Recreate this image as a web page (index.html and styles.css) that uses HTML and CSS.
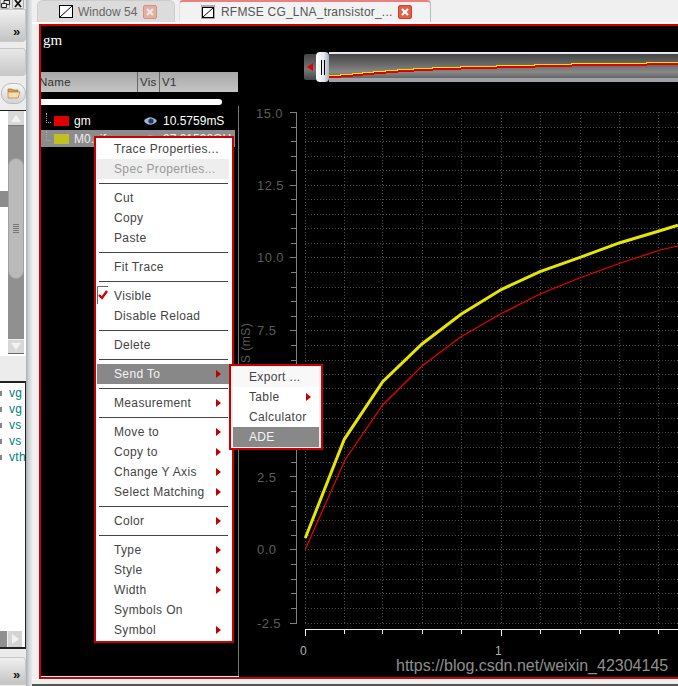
FILE: index.html
```html
<!DOCTYPE html>
<html lang="en">
<head>
<meta charset="utf-8">
<title>RFMSE CG_LNA_transistor</title>
<link rel="stylesheet" href="styles.css">
</head>
<body>
<div class="app">
  <aside class="side">
    <div class="wm">
      <span class="wm-btn">
        <svg width="9" height="8" viewBox="0 0 9 8"><path d="M.5 3.5h5v4h-5zM3 3V.5h5.500v4H6" fill="none" stroke="#222"/></svg>
      </span>
      <span class="wm-btn wm-x">
        <svg width="10" height="8" viewBox="0 0 10 8"><path d="M2 0 8 7M8 0 2 7" fill="none" stroke="#111" stroke-width="1.800"/></svg>
      </span>
    </div>
    <div class="panel-btn panel-a"><span class="more">»</span></div>
    <div class="panel-btn panel-b"></div>
    <div class="tool-row">
      <span class="round-btn">
        <svg width="14" height="12" viewBox="0 0 14 12"><path d="M1 2h4l1 1h5v2H1z" fill="#d8a050" stroke="#a87030" stroke-width=".7"/><path d="M1 5h12l-2 6H1z" fill="#f6dcae" stroke="#b88040" stroke-width=".7"/></svg>
      </span>
    </div>
    <div class="side-tree">
      <div class="tree-gutter"><div class="tree-mark"></div></div>
      <div class="vscroll">
        <div class="arrow-btn"><span class="tri-up"></span></div>
        <div class="thumb"><span class="grip"></span></div>
        <div class="trough"></div>
        <div class="arrow-btn arrow-bottom"><span class="tri-down"></span></div>
      </div>
    </div>
    <div class="side-sep"></div>
    <div class="side-list">
      <div class="vars">
        <div class="var"><i></i>vg</div>
        <div class="var"><i></i>vg</div>
        <div class="var"><i></i>vs</div>
        <div class="var"><i></i>vs</div>
        <div class="var"><i></i>vth</div>
      </div>
      <div class="hscroll"><span class="h-btn"><span class="tri-right"></span></span></div>
    </div>
    <div class="panel-btn panel-c"><span class="more">»</span></div>
  </aside>
  <div class="strip"></div>
  <main class="main">
    <div class="tabs">
      <div class="tab tab-off">
        <svg class="tab-icon" width="14" height="13" viewBox="0 0 14 13"><rect x=".5" y=".5" width="13" height="12" fill="#fff" stroke="#000"/><path d="M1 12 13 1" stroke="#000"/></svg>
        <span class="tab-name">Window 54</span>
        <span class="close close-off"><svg width="12" height="12" viewBox="0 0 12 12"><path d="M3 3l6 6M9 3l-6 6" stroke="#f4e4e0" stroke-width="2.200"/></svg></span>
      </div>
      <div class="tab tab-on">
        <span class="icon-bg"><svg class="tab-icon" width="12" height="11" viewBox="0 0 12 11"><rect x=".5" y=".5" width="11" height="10" fill="#fff" stroke="#000"/><path d="M1 10 11 1" stroke="#000"/></svg></span>
        <span class="tab-name">RFMSE CG_LNA_transistor_...</span>
        <span class="close close-on"><svg width="12" height="12" viewBox="0 0 12 12"><path d="M3 3l6 6M9 3l-6 6" stroke="#fff" stroke-width="2.200"/></svg></span>
      </div>
    </div>
    <div class="frame">
      <section class="legend">
        <div class="title">gm</div>
        <div class="head">
          <span class="col col-name">Name</span>
          <span class="col col-vis">Vis</span>
          <span class="col">V1</span>
        </div>
        <div class="bar"></div>
        <div class="traces">
          <div class="trace">
            <span class="tree"></span><span class="swatch sw-red"></span>
            <span class="t-name">gm</span>
            <svg class="eye" width="15" height="10" viewBox="0 0 15 10"><path d="M1 5C4 0 10 0 14 5 10 10 4 10 1 5z" fill="#9fb4d8"/><circle cx="8" cy="5" r="2.600" fill="#2a3a5a"/></svg>
            <span class="t-val">10.5759mS</span>
          </div>
          <div class="trace trace-sel">
            <span class="tree"></span><span class="swatch sw-yellow"></span>
            <span class="t-name">M0.vif</span>
            <svg class="eye" width="15" height="10" viewBox="0 0 15 10"><path d="M1 5C4 0 10 0 14 5 10 10 4 10 1 5z" fill="#9fb4d8"/><circle cx="8" cy="5" r="2.600" fill="#2a3a5a"/></svg>
            <span class="t-val">97.91598GH</span>
          </div>
        </div>
      </section>
      <section class="plot">
        <div class="slider">
          <div class="s-left"><span class="tri-left"></span></div>
          <div class="s-handle"><i></i><i></i></div>
          <div class="s-track">
            <svg class="s-svg" width="349" height="30" viewBox="329 52 349 30" shape-rendering="crispEdges">
              <path d="M329 77H340V76H352V75H362V74H373V73H385V72H397V71H413V70H432V69H460V68H496V67H534V66H571V65H646V64H678" fill="none" stroke="#e00000" stroke-width="2"/>
              <path d="M329 75.500H340V74.500H352V73.500H362V72.500H373V71.500H385V70.500H397V69.500H413V68.500H432V67.500H460V66.500H496V65.500H534V64.500H571V63.500H646V62.500H678" fill="none" stroke="#e6e600"/>
            </svg>
          </div>
        </div>
        <svg class="chart" width="439" height="577" viewBox="239 100 439 577">
          <path class="grid" d="M305 112.500H678M305 127.500H678M305 141.500H678M305 156.500H678M305 170.500H678M305 185.500H678M305 199.500H678M305 214.500H678M305 228.500H678M305 243.500H678M305 257.500H678M305 272.500H678M305 287.500H678M305 301.500H678M305 316.500H678M305 330.500H678M305 345.500H678M305 360.500H678M305 374.500H678M305 388.500H678M305 403.500H678M305 418.500H678M305 432.500H678M305 447.500H678M305 462.500H678M305 476.500H678M305 491.500H678M305 506.500H678M305 520.500H678M305 535.500H678M305 549.500H678M305 564.500H678M305 579.500H678M305 593.500H678M305 608.500H678M305 623.500H678"/>
          <path class="grid" d="M305.500 112V624M344.500 112V624M382.500 112V624M422.500 112V624M461.500 112V624M501.500 112V624M540.500 112V624M580.500 112V624M619.500 112V624M658.500 112V624"/>
          <path class="axis-y" d="M296.500 112V624M290 112.500H297M291 127.500H297M291 141.500H297M291 156.500H297M291 170.500H297M290 185.500H297M291 199.500H297M291 214.500H297M291 228.500H297M291 243.500H297M290 257.500H297M291 272.500H297M291 287.500H297M291 301.500H297M291 316.500H297M290 330.500H297M291 345.500H297M291 360.500H297M291 374.500H297M291 388.500H297M290 403.500H297M291 418.500H297M291 432.500H297M291 447.500H297M291 462.500H297M290 476.500H297M291 491.500H297M291 506.500H297M291 520.500H297M291 535.500H297M290 549.500H297M291 564.500H297M291 579.500H297M291 593.500H297M291 608.500H297M290 623.500H297"/>
          <path class="axis-x" d="M305 629.500H678M305.500 629V636M344.500 629V634M382.500 629V634M422.500 629V634M461.500 629V634M501.500 629V636M540.500 629V634M580.500 629V634M619.500 629V634M658.500 629V634"/>
          <polyline class="curve-y" points="305.300,538 344.300,439.300 382.700,381.700 422,344 461,314.300 501.700,289.300 540,271.700 580,257.300 620,242.700 660,230.700 678,225.300"/>
          <polyline class="curve-r" points="305.300,549.300 345,460 382.700,405 422,366 461,336.700 500,314.300 540,294 580,277.700 620,263.300 660,250 678,246"/>
          <g class="y-lab">
            <text x="256" y="117.500">15.0</text>
            <text x="257" y="190">12.5</text>
            <text x="257" y="262">10.0</text>
            <text x="257" y="335">7.5</text>
            <text x="257" y="408">5.0</text>
            <text x="257" y="482">2.5</text>
            <text x="257" y="554">0.0</text>
            <text x="257" y="628">-2.5</text>
          </g>
          <text class="y-title" transform="translate(250 363) rotate(-90)">S (mS)</text>
          <text class="x-lab" x="300" y="655">0</text>
          <text class="x-lab" x="495" y="655">1</text>
        </svg>
      </section>
    </div>
    <div class="foot"></div>
  </main>

  <div class="menu">
    <div class="mi mi-white">Trace Properties...</div>
    <div class="mi mi-off">Spec Properties...</div>
    <div class="ms"></div>
    <div class="mi">Cut</div>
    <div class="mi">Copy</div>
    <div class="mi">Paste</div>
    <div class="ms"></div>
    <div class="mi">Fit Trace</div>
    <div class="ms"></div>
    <div class="mi">
      <svg class="check" width="12" height="19" viewBox="0 0 12 19"><path d="M.5 18V.5H11" fill="none" stroke="#666"/><path d="M2 9l3 3 5-7" fill="none" stroke="#d00000" stroke-width="2.400"/></svg>
      <span>Visible</span>
    </div>
    <div class="mi">Disable Reload</div>
    <div class="ms"></div>
    <div class="mi">Delete</div>
    <div class="ms"></div>
    <div class="mi mi-sel">Send To<span class="ar"></span></div>
    <div class="ms"></div>
    <div class="mi">Measurement<span class="ar"></span></div>
    <div class="ms"></div>
    <div class="mi">Move to<span class="ar"></span></div>
    <div class="mi">Copy to<span class="ar"></span></div>
    <div class="mi">Change Y Axis<span class="ar"></span></div>
    <div class="mi">Select Matching<span class="ar"></span></div>
    <div class="ms"></div>
    <div class="mi">Color<span class="ar"></span></div>
    <div class="ms"></div>
    <div class="mi">Type<span class="ar"></span></div>
    <div class="mi">Style<span class="ar"></span></div>
    <div class="mi">Width<span class="ar"></span></div>
    <div class="mi">Symbols On</div>
    <div class="mi">Symbol<span class="ar"></span></div>
  </div>

  <div class="menu submenu">
    <div class="mi">Export ...</div>
    <div class="mi">Table<span class="ar"></span></div>
    <div class="mi">Calculator</div>
    <div class="mi mi-sel">ADE</div>
  </div>

  <div class="watermark">https://blog.csdn.net/weixin_42304145</div>
</div>
</body>
</html>
```
FILE: styles.css
```css
* { box-sizing: border-box; }
html, body { margin: 0; padding: 0; background: #000; }
body { font-family: "Liberation Sans", Arial, sans-serif; }
.app {
  position: relative;
  display: flex;
  width: 678px;
  height: 686px;
  overflow: hidden;
  background: #f0f0f0;
}

/* left dock */
.side {
  width: 26px;
  flex: none;
  display: flex;
  flex-direction: column;
  background: #ececec;
}
.wm { height: 9px; display: flex; gap: 2px; overflow: hidden; background: #e4e4e4; }
.wm-btn { width: 10px; height: 9px; background: #e8e8e8; border: 1px solid #aaa; border-top: 0; border-radius: 0 0 2px 2px; }
.wm-btn svg { display: block; }
.wm-x { width: 12px; }
.panel-btn { background: linear-gradient(#f0f0f0, #c4c4c4); border: 1px solid #c8c8c8; border-left: 0; border-radius: 0 0 4px 0; position: relative; }
.panel-a { height: 33px; margin-bottom: 6px; }
.panel-b { height: 28px; border-radius: 0 4px 4px 0; background: linear-gradient(#e8e8e8, #c8c8c8); }
.panel-c { height: 28px; margin-top: 8px; border-radius: 0 4px 0 0; }
.more { position: absolute; left: 13px; bottom: 3px; font-size: 13px; line-height: 13px; font-weight: bold; color: #111; }
.tool-row { height: 34px; display: flex; align-items: center; justify-content: flex-end; background: #ececec; }
.round-btn { width: 25px; height: 21px; display: flex; align-items: center; justify-content: center; border: 1px solid #bbb; border-radius: 10px; background: linear-gradient(#f6f6f6, #d4d4d4); }
.side-tree { height: 244px; flex: none; display: flex; background: #fff; border-top: 1px solid #222; }
.tree-gutter { width: 8px; padding-top: 80px; }
.tree-mark { height: 16px; background: #8c8c8c; }
.vscroll { width: 16px; display: flex; flex-direction: column; background: #909090; }
.arrow-btn { height: 15px; background: #d8d8d8; display: flex; align-items: center; justify-content: center; border-bottom: 1px solid #777; flex: none; }
.arrow-bottom { border-bottom: 1px solid #666; border-top: 1px solid #eee; }
.tri-up { width: 0; height: 0; border: 5px solid transparent; border-top: 0; border-bottom: 7px solid #f2f2f2; }
.tri-down { width: 0; height: 0; border: 5px solid transparent; border-bottom: 0; border-top: 7px solid #f2f2f2; }
.tri-right { width: 0; height: 0; border: 5px solid transparent; border-right: 0; border-left: 7px solid #f2f2f2; }
.thumb { height: 121px; margin-top: 32px; background: #bababa; border-radius: 8px; border: 1px solid #a0a0a0; display: flex; align-items: center; justify-content: center; padding-top: 20px; flex: none; }
.grip { width: 6px; height: 9px; background: repeating-linear-gradient(#777 0 1px, transparent 1px 2px); }
.trough { flex: 1; }
.side-sep { height: 27px; flex: none; background: #ececec; border-top: 2px solid #fff; }
.side-list { height: 268px; flex: none; background: #fff; border-top: 2px solid #222; border-right: 2px solid #222; border-bottom: 2px solid #222; display: flex; flex-direction: column; margin-right: -1px; }
.vars { flex: 1; padding-top: 2px; }
.var { height: 16px; font-size: 12px; line-height: 16px; color: #008080; letter-spacing: .3px; display: flex; align-items: center; white-space: nowrap; overflow: hidden; }
.var i { width: 2px; height: 5px; background: #888; margin-right: 7px; flex: none; }
.hscroll { height: 16px; background: linear-gradient(90deg, #909090 0 7px, #fff 7px); display: flex; }
.h-btn { width: 15px; margin-left: 7px; background: #d4d4d4; border-left: 1px solid #eee; display: flex; align-items: center; justify-content: center; }

.strip { width: 6px; flex: none; background: linear-gradient(90deg, #aab0b8, #d0d4d8 50%, #e8e8e8); }

/* main column */
.main { flex: 1; min-width: 0; display: flex; flex-direction: column; background: #f0f0f0; }
.tabs { height: 24px; flex: none; display: flex; padding-left: 5px; gap: 4px; background: linear-gradient(#f0f0f0 22px, #fff 22px); }
.tab { height: 22px; display: flex; align-items: center; font-size: 12px; color: #555; white-space: nowrap; }
.tab-off { width: 138px; padding-left: 21px; background: #dcdcdc; border: 1px solid #ccc; border-bottom: 0; border-radius: 6px 6px 0 0; }
.tab-on { width: 252px; padding-left: 21px; letter-spacing: .2px; background: #f2f2f2; border-right: 1px solid #bbb; border-top: 2px solid #ea8080; border-left: 1px solid #e0e0e0; border-radius: 4px 4px 0 0; }
.tab-icon { display: block; flex: none; }
.icon-bg { width: 14px; height: 14px; background: #aaa; padding: 1.500px 1px; flex: none; }
.tab-name { margin-left: 6px; }
.tab-off .tab-name { color: #666; margin-left: 5px; }
.close { width: 14px; height: 14px; border-radius: 2px; flex: none; }
.close svg { display: block; }
.close-off { margin-left: 6px; background: #e0b0a4; border: 1px solid #d89080; }
.close-on { margin-left: 6px; background: #e0604a; border: 1px solid #d04030; }

.frame { height: 655px; flex: none; margin-left: 7px; border: 2px solid #d00000; border-right: 0; display: flex; background: #000; }
.legend { width: 198px; flex: none; display: flex; flex-direction: column; border-bottom: 1px solid #eee; }
.title { height: 46px; padding: 6px 0 0 2px; font-family: "Liberation Serif", serif; font-size: 15px; line-height: 17px; color: #fff; }
.head { height: 20px; margin-right: 1px; flex: none; display: flex; align-items: center; background: linear-gradient(#a8a8a8, #c4c4c4); font-size: 11.500px; letter-spacing: .3px; color: #333; overflow: hidden; }
.col { height: 100%; line-height: 20px; padding-left: 2px; flex: none; }
.col-name { width: 101px; margin-left: -4px; border-right: 1px solid #666; }
.col-vis { width: 22px; border-right: 1px solid #666; }
.bar { height: 6px; width: 181px; margin-top: 7px; background: #fff; border-radius: 0 3px 3px 0; flex: none; }
.traces { flex: 1; border-right: 1px solid #777; padding-top: 6px; margin-top: 1px; }
.trace { height: 18px; margin-right: 3px; display: flex; align-items: center; font-size: 12px; color: #fff; white-space: nowrap; overflow: hidden; }
.trace-sel { background: #8c8c8c; height: 17px; margin-top: 0; color: #eee; }
.tree { width: 5px; height: 10px; margin: -6px 0 0 5px; border-left: 1px dotted #aaa; border-bottom: 1px dotted #aaa; flex: none; }
.swatch { width: 15px; height: 10px; margin-left: 3px; flex: none; }
.sw-red { background: #e00000; }
.sw-yellow { background: #c0c020; }
.t-name { width: 69px; margin-left: 5px; flex: none; }
.eye { flex: none; }
.t-val { margin-left: 5px; }

.plot { flex: 1; min-width: 0; display: flex; flex-direction: column; }
.slider { height: 30px; flex: none; margin: 26px 0 18px 65px; display: flex; }
.s-left { width: 12px; height: 26px; margin-top: 2px; background: linear-gradient(#444, #777 60%, #444); border-radius: 2px 0 0 2px; display: flex; align-items: center; justify-content: center; }
.tri-left { width: 0; height: 0; border: 4px solid transparent; border-left: 0; border-right: 6px solid #e00000; }
.s-handle { width: 13px; background: linear-gradient(90deg, #fff, #e4e8ee 60%, #a8b0b8); border-radius: 4px; display: flex; align-items: center; justify-content: center; gap: 2px; }
.s-handle i { width: 1px; height: 15px; background: #000; }
.s-track { flex: 1; min-width: 0; position: relative; border-top: 2px solid #e4e8ee; border-bottom: 4px solid #a0a4a8; background: linear-gradient(#444, #666 40%, #888 75%, #666); }
.s-svg { position: absolute; left: 0; top: -2px; display: block; }
.chart { display: block; flex: none; width: 439px; height: 577px; }
.grid { stroke: #4c4c4c; stroke-width: 1; stroke-dasharray: 1 2; fill: none; }
.axis-y { stroke: #808080; stroke-width: 1; fill: none; }
.axis-x { stroke: #f0f0f0; stroke-width: 1; fill: none; }
.curve-y { stroke: #e6e600; stroke-width: 3; fill: none; }
.curve-r { stroke: #f00000; stroke-width: 1.200; fill: none; }
.y-lab text { font-size: 13px; letter-spacing: .4px; fill: #5c5c5c; }
.y-title { font-size: 12px; letter-spacing: .5px; fill: #5c5c5c; }
.x-lab { font-size: 12px; fill: #b0b0b0; }
.foot { flex: 1; background: #f0f0f0; border-bottom: 2px solid #555; border-top: 1px solid #fff; }

/* popup menus */
.menu { position: absolute; left: 94px; top: 136px; width: 140px; height: 507px; padding: 1px 3px 1px 1px; background: #fff; border: 2px solid #c80000; color: #444; font-size: 12px; letter-spacing: .35px; }
.mi { height: 20px; line-height: 20px; padding-left: 17px; padding-right: 8px; display: flex; align-items: center; position: relative; white-space: nowrap; }
.mi-off { color: #999; background: #eee; }
.mi-sel { background: #888; color: #f4f4f4; }
.ms { height: 9px; margin: 0 1px 0 2px; display: flex; align-items: center; }
.ms::before { content: ""; display: block; width: 100%; height: 1px; background: #444; }
.ar { width: 0; height: 0; margin-left: auto; border: 4px solid transparent; border-right: 0; border-left: 5px solid #c00000; }
.check { position: absolute; left: 0; top: 0; }
.submenu { left: 229px; top: 364px; width: 94px; height: 86px; padding: 1px 2px; background: #f0f0f0; }
.submenu .mi { background: #fff; padding-left: 16px; }
.submenu .mi:first-child { background: #f8f8f8; }
.submenu .mi-sel { background: #888; }
.watermark { position: absolute; left: 396px; top: 656px; font-size: 16px; line-height: 20px; color: #8f8f8f; white-space: nowrap; }
```
